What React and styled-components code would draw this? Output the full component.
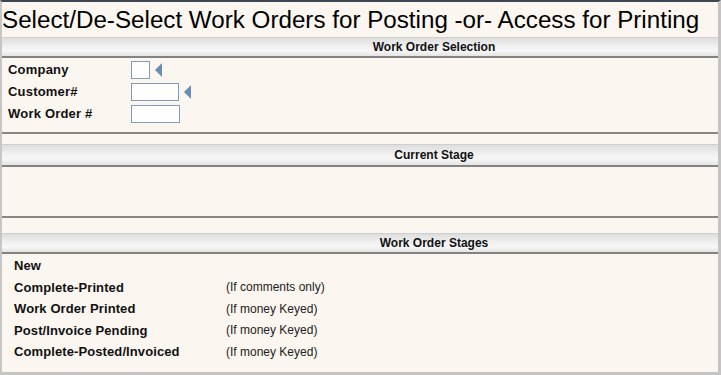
import React from "react";
import styled, { createGlobalStyle } from "styled-components";

const Global = createGlobalStyle`
  html, body { margin: 0; padding: 0; background: #fbf6f0; }
  body { font-family: "Liberation Sans", Arial, sans-serif; }
`;

const Frame = styled.div`
  box-sizing: border-box;
  width: 721px;
  height: 375px;
  background: #fbf6f0;
  border-top: 2px solid #3d4853;
  border-left: 2px solid #c6c6c6;
  border-right: 3px solid #c4c4c4;
  border-bottom: 3px solid #c4c4c4;
  display: flex;
  flex-direction: column;
  overflow: hidden;
`;

const Title = styled.h1`
  margin: 0;
  height: 35px;
  flex: none;
  display: flex;
  align-items: center;
  padding-top: 1px;
  box-sizing: border-box;
  font-size: 24.2px;
  font-weight: normal;
  color: #000;
  white-space: nowrap;
`;

const Bar = styled.div`
  box-sizing: border-box;
  flex: none;
  height: ${(p) => p.$h || 20}px;
  border-top: 1px solid #cfcfcf;
  border-bottom: 2px solid #858280;
  background: linear-gradient(#dedede 0%, #eeeeee 40%, #f7f7f7 70%, #e4e4e4 100%);
  display: flex;
  align-items: center;
  justify-content: center;
  padding-left: 148px;
  font-size: 12px;
  font-weight: bold;
  color: #111;
`;

const Form = styled.div`
  flex: none;
  padding: 3px 0 5px 6px;
  display: flex;
  flex-direction: column;
  border-bottom: 2px solid #8a8682;
`;

const Row = styled.div`
  display: grid;
  grid-template-columns: 123px auto;
  align-items: start;
  height: 22px;
`;

const Label = styled.span`
  font-size: 13px;
  line-height: 18px;
  font-weight: bold;
  color: #111;
  letter-spacing: 0.2px;
`;

const Field = styled.div`
  display: flex;
  align-items: center;
  gap: 5px;
  height: 18px;
`;

const Input = styled.input`
  box-sizing: border-box;
  width: ${(p) => p.$w}px;
  height: 18px;
  margin: 0;
  border: 1px solid #7f9db9;
  background: #fff;
  padding: 0;
  outline: none;
`;

const Arrow = styled.span`
  width: 0;
  height: 0;
  border-top: 7px solid transparent;
  border-bottom: 7px solid transparent;
  border-right: 7px solid #6d8caf;
`;

const Gap = styled.div`
  flex: none;
  height: ${(p) => p.$h}px;
`;

const Empty = styled.div`
  flex: none;
  height: 49px;
  border-bottom: 2px solid #8a8682;
`;

const Stages = styled.div`
  padding: 1px 0 0 12px;
  display: flex;
  flex-direction: column;
`;

const StageRow = styled.div`
  display: grid;
  grid-template-columns: 212px auto;
  align-items: center;
  height: 21.5px;
`;

const StageName = styled.span`
  font-size: 13px;
  font-weight: bold;
  color: #111;
  letter-spacing: 0.1px;
`;

const Note = styled.span`
  font-size: 12px;
  color: #222;
`;

const stages = [
  ["New", ""],
  ["Complete-Printed", "(If comments only)"],
  ["Work Order Printed", "(If money Keyed)"],
  ["Post/Invoice Pending", "(If money Keyed)"],
  ["Complete-Posted/Invoiced", "(If money Keyed)"],
];

export default function App() {
  return (
    <>
      <Global />
      <Frame>
        <Title>Select/De-Select Work Orders for Posting -or- Access for Printing</Title>
        <Bar $h={21}>Work Order Selection</Bar>
        <Form>
          <Row>
            <Label>Company</Label>
            <Field>
              <Input $w={19} />
              <Arrow />
            </Field>
          </Row>
          <Row>
            <Label>Customer#</Label>
            <Field>
              <Input $w={48} />
              <Arrow />
            </Field>
          </Row>
          <Row>
            <Label>Work Order #</Label>
            <Field>
              <Input $w={49} />
            </Field>
          </Row>
        </Form>
        <Gap $h={10} />
        <Bar $h={23}>Current Stage</Bar>
        <Empty />
        <Gap $h={15} />
        <Bar $h={21}>Work Order Stages</Bar>
        <Stages>
          {stages.map(([name, note]) => (
            <StageRow key={name}>
              <StageName>{name}</StageName>
              <Note>{note}</Note>
            </StageRow>
          ))}
        </Stages>
      </Frame>
    </>
  );
}
